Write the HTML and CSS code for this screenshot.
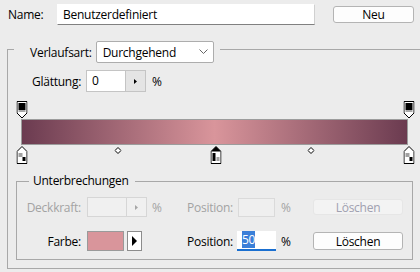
FILE: index.html
```html
<!DOCTYPE html>
<html lang="de">
<head>
  <meta charset="UTF-8" />
  <title>Verläufe bearbeiten</title>
  <link rel="stylesheet" href="styles.css">
</head>
<body>

  <div class="name-row">
    <span class="name-label">Name:</span>
    <div class="name-input">Benutzerdefiniert</div>
    <button class="btn btn-new">Neu</button>
  </div>

  <div class="grad-box">
    <div class="type-row">
      <span class="type-label">Verlaufsart:</span>
      <div class="select">
        <span>Durchgehend</span>
        <svg width="9" height="6" viewBox="0 0 9 6"><path d="M0.5 0.5l4 4 4-4" fill="none" stroke="#666"/></svg>
      </div>
    </div>

    <div class="smooth-row">
      <span class="smooth-label">Glättung:</span>
      <div class="spin">
        <span class="spin-val">0</span>
        <span class="spin-btn"><svg width="3" height="5" viewBox="0 0 3 5"><path d="M0 0l3 2.5-3 2.5z" fill="#000"/></svg></span>
      </div>
      <span class="unit">%</span>
    </div>

    <div class="editor">
      <div class="track track-top">
        <svg class="pin" style="left: 0%" width="11" height="18" viewBox="0 0 11 18">
          <path d="M0.5 0.5h10v11.5l-5 5-5-5z" fill="#fff" stroke="#000"/>
          <rect x="2" y="2" width="7" height="7" fill="#000"/>
          <rect x="2" y="9" width="7" height="2" fill="#a8a8a8"/>
        </svg>
        <svg class="pin" style="left: 100%" width="11" height="18" viewBox="0 0 11 18">
          <path d="M0.5 0.5h10v11.5l-5 5-5-5z" fill="#fff" stroke="#000"/>
          <rect x="2" y="2" width="7" height="7" fill="#000"/>
          <rect x="2" y="9" width="7" height="2" fill="#a8a8a8"/>
        </svg>
      </div>
      <div class="bar"></div>
      <div class="track track-bottom">
        <svg class="pin" style="left: 0%" width="11" height="18" viewBox="0 0 11 18">
          <path d="M5.5 0.5l5 5v12h-10v-12z" fill="#fff" stroke="#000"/>
          <rect x="2" y="7" width="4" height="4" fill="#a0a0a0"/>
          <rect x="6" y="11" width="3" height="4" fill="#000"/>
        </svg>
        <svg class="mid" style="left: 25%" width="7" height="7" viewBox="0 0 7 7"><path d="M3.5 0.5l3 3-3 3-3-3z" fill="#fff" stroke="#000"/></svg>
        <svg class="pin" style="left: 50%" width="11" height="18" viewBox="0 0 11 18">
          <path d="M5.5 0.5l5 5v12h-10v-12z" fill="#fff" stroke="#000"/>
          <path d="M5.5 0.5l5 5h-10z" fill="#000"/>
          <rect x="2" y="7" width="3" height="8" fill="#000"/>
          <rect x="6" y="11" width="3" height="4" fill="#a0a0a0"/>
        </svg>
        <svg class="mid" style="left: 75%" width="7" height="7" viewBox="0 0 7 7"><path d="M3.5 0.5l3 3-3 3-3-3z" fill="#fff" stroke="#000"/></svg>
        <svg class="pin" style="left: 100%" width="11" height="18" viewBox="0 0 11 18">
          <path d="M5.5 0.5l5 5v12h-10v-12z" fill="#fff" stroke="#000"/>
          <rect x="2" y="7" width="4" height="4" fill="#a0a0a0"/>
          <rect x="6" y="11" width="3" height="4" fill="#000"/>
        </svg>
      </div>
    </div>

    <div class="stops-box">
      <div class="stops-legend">Unterbrechungen</div>
      <div class="stops-grid">
        <span class="cell-label disabled">Deckkraft:</span>
        <div class="cell-ctrl">
          <div class="spin spin-off">
            <span class="spin-val"></span>
            <span class="spin-btn"><svg width="3" height="5" viewBox="0 0 3 5"><path d="M0 0l3 2.5-3 2.5z" fill="#a6a6a6"/></svg></span>
          </div>
        </div>
        <span class="cell-unit disabled">%</span>
        <span class="cell-pos disabled">Position:</span>
        <div class="field field-off"></div>
        <span class="cell-unit disabled">%</span>
        <button class="btn btn-del btn-off">Löschen</button>

        <span class="cell-label">Farbe:</span>
        <div class="cell-ctrl">
          <div class="swatch"></div>
          <span class="swatch-btn"><svg width="5" height="10" viewBox="0 0 5 10"><path d="M0 0l5 5-5 5z" fill="#000"/></svg></span>
        </div>
        <span class="cell-unit"></span>
        <span class="cell-pos">Position:</span>
        <div class="field field-on"><span class="sel">50</span></div>
        <span class="cell-unit">%</span>
        <button class="btn btn-del">Löschen</button>
      </div>
    </div>
  </div>

</body>
</html>
```

FILE: styles.css
```css
* {
  box-sizing: border-box;
  margin: 0;
  padding: 0;
}

body {
  width: 420px;
  height: 272px;
  overflow: hidden;
  background: #ececec;
  font-family: 'Open Sans', 'Noto Sans', sans-serif;
  font-size: 12px;
  letter-spacing: -0.25px;
  color: #000;
}

.name-row {
  display: flex;
  align-items: flex-start;
  padding: 4px 0 0 8px;
}

.name-label {
  width: 49px;
  line-height: 21px;
}

.name-input {
  width: 258px;
  height: 21px;
  padding-left: 5px;
  line-height: 19px;
  background: #fff;
  border: 1px solid #fff;
  border-bottom-color: #808080;
  border-right-color: #d0d0d0;
}

.btn {
  font-family: inherit;
  font-size: 12px;
  letter-spacing: inherit;
  color: #000;
  background: #fdfdfd;
  border: 1px solid #b4b4b4;
  border-radius: 3px;
}

.btn-new {
  width: 81px;
  height: 17px;
  margin: 2px 0 0 18px;
  line-height: 14px;
}

.grad-box {
  width: 413px;
  height: 220px;
  margin: 24px 0 0 7px;
  border: 1px solid #a8a8a8;
  border-right: none;
}

.type-row {
  display: flex;
  align-items: center;
  gap: 4px;
  width: fit-content;
  margin: -9px 0 0 6px;
  padding: 0 6px 0 16px;
  background: #ececec;
}

.select {
  display: flex;
  align-items: center;
  justify-content: space-between;
  width: 118px;
  height: 22px;
  padding: 0 5px 0 6px;
  background: #fff;
  border: 1px solid #adadad;
  border-radius: 2px;
}

.smooth-row {
  display: flex;
  align-items: center;
  margin: 7px 0 0 24px;
}

.smooth-label {
  width: 54px;
}

.spin {
  display: flex;
  width: 60px;
  height: 22px;
  background: #fff;
  border: 1px solid #c4c4c4;
}

.spin-val {
  flex: 1;
  padding-left: 5px;
  line-height: 20px;
}

.spin-btn {
  display: flex;
  align-items: center;
  justify-content: center;
  width: 20px;
  background: #e4e4e4;
  border-left: 1px solid #c4c4c4;
}

.unit {
  margin-left: 6px;
}

.editor {
  width: 387px;
  margin: 9px 0 0 13px;
}

.track {
  position: relative;
  height: 18px;
}

.track-bottom {
  height: 19px;
}

.pin {
  position: absolute;
  top: 0;
  margin-left: 1px;
  transform: translateX(-50%);
}

.track-bottom .pin {
  top: 1px;
}

.mid {
  position: absolute;
  top: 2px;
  transform: translateX(-50%);
}

.bar {
  height: 26px;
  border: 1px solid #9c9c9c;
  background: linear-gradient(to right, #6b3b50, #d9959b 50%, #6b3b50);
}

.stops-box {
  width: 397px;
  height: 79px;
  margin: 17px 0 0 8px;
  border: 1px solid #a8a8a8;
}

.stops-legend {
  width: fit-content;
  margin: -9px 0 0 12px;
  padding: 0 6px 0 4px;
  line-height: 16px;
  background: #ececec;
}

.stops-grid {
  display: grid;
  grid-template-columns: 64px 66px 40px 50px 39px 37px 90px;
  grid-template-rows: 20px 20px;
  row-gap: 14px;
  align-items: center;
  margin-top: 8px;
}

.cell-label {
  text-align: right;
}

.cell-ctrl {
  display: flex;
  align-items: center;
  height: 20px;
  padding-left: 6px;
}

.cell-unit {
  padding-left: 5px;
}

.disabled {
  color: #a3a3a3;
}

.spin-off {
  height: 20px;
  background: #f0f0f0;
  border-color: #d6d6d6;
}

.spin-off .spin-btn {
  background: #f0f0f0;
  border-left-color: #d6d6d6;
}

.swatch {
  width: 37px;
  height: 20px;
  background: #d9959b;
  border: 1px solid #9a9a9a;
}

.swatch-btn {
  display: flex;
  align-items: center;
  justify-content: center;
  width: 15px;
  height: 20px;
  margin-left: 3px;
  background: #fff;
  border: 1px solid #8c8c8c;
}

.field {
  height: 20px;
}

.field-off {
  margin: 0 1px;
  height: 19px;
  background: #efefef;
  border: 1px solid #dadada;
}

.field-on {
  padding-left: 5px;
  line-height: 18px;
  background: #fff;
  border-bottom: 2px solid #1a6fd0;
}

.sel {
  background: #3b7fd8;
  color: #fff;
}

.btn-del {
  height: 18px;
  line-height: 15px;
}

.btn-off {
  height: 16px;
  color: #a0a0b0;
  background: #f3f3f3;
  border-color: #e6e6e6;
}
```
